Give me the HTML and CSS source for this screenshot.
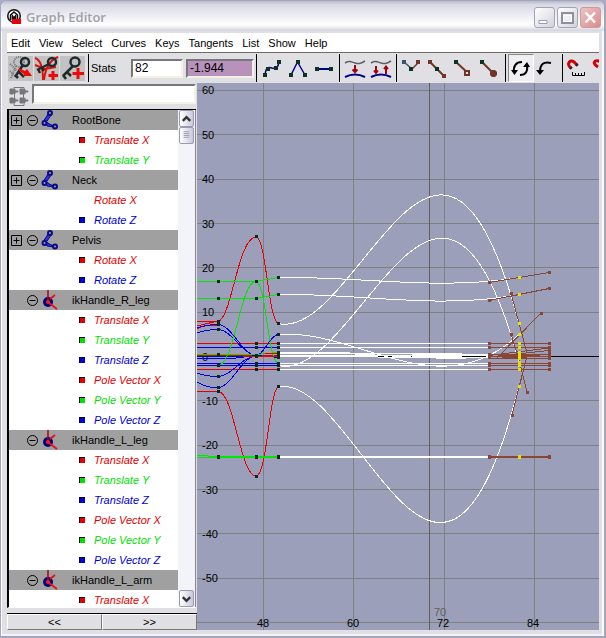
FILE: index.html
```html
<!DOCTYPE html>
<html lang="en">
<head>
<meta charset="utf-8">
<title>Graph Editor</title>
<link rel="stylesheet" href="styles.css">
</head>
<body>
<svg class="defs" aria-hidden="true">
  <symbol id="joint" viewBox="0 0 18 20">
    <path d="M9 3L3 13L14 17" fill="none" stroke="#0a0a8c" stroke-width="2"/>
    <path d="M7 4L2 12L6 11L11 4zM4 11L13 17L6 16z" fill="#2a35dc" stroke="#0a0a8c"/>
    <g fill="#a0a0a0" stroke="#0a0a8c" stroke-width="2"><circle cx="9" cy="3" r="2"/><circle cx="3.500" cy="13" r="2"/><circle cx="14" cy="16.500" r="2"/></g>
  </symbol>
  <symbol id="ik" viewBox="0 0 18 20">
    <circle cx="7" cy="12" r="5" fill="#000078"/>
    <path d="M7 0V12" stroke="#b00010" stroke-width="1.500"/>
    <path d="M9 9L14 5M8 13L16 19" stroke="#e81020" stroke-width="2"/>
    <circle cx="7" cy="12" r="2" fill="#f02030"/>
  </symbol>
  <symbol id="plus" viewBox="0 0 11 11"><path d="M.5.5h10v10H.5zM2.500 5.500h6M5.500 2.500v6" fill="none" stroke="#000"/></symbol>
  <symbol id="minus" viewBox="0 0 11 11"><circle cx="5.500" cy="5.500" r="5" fill="none" stroke="#000"/><path d="M2.500 5.500h6" stroke="#000"/></symbol>
</svg>
<div class="window">
  <header class="titlebar">
    <svg class="logo" viewBox="0 0 16 16"><circle cx="7" cy="7" r="7" fill="#111"/><circle cx="7" cy="7" r="5.500" fill="#fff"/><path d="M3.500 11V6L7 3L10.500 6V11M5.500 11V7L7 9L8.500 7V11" fill="none" stroke="#111" stroke-width="1.500"/><path d="M5 10H14V15H5z" fill="#e80010"/></svg>
    <h1>Graph Editor</h1>
    <button class="win" aria-label="Minimize"><svg viewBox="0 0 19 19"><path d="M4 12.500h8v3H4z" fill="#fff" stroke="#9a9aac"/></svg></button>
    <button class="win" aria-label="Maximize"><svg viewBox="0 0 19 19"><path d="M4 5h11v10H4z" fill="none" stroke="#8f8fa0" stroke-width="2"/><path d="M5.500 7.500h8v6h-8z" fill="#eeeef4" stroke="#fff"/></svg></button>
    <button class="win close" aria-label="Close"><svg viewBox="0 0 19 19"><path d="M4.500 4.500L14 14.500M14 4.500L4.500 14.500" stroke="#fff" stroke-width="2.500"/></svg></button>
  </header>
  <div class="client">
    <nav class="menu">
      <button>Edit</button><button>View</button><button>Select</button><button>Curves</button><button>Keys</button><button>Tangents</button><button>List</button><button>Show</button><button>Help</button>
    </nav>
    <div class="toolbar">
      <button class="tool key" aria-label="Move nearest key"><svg viewBox="0 0 26 25"><g fill="none" stroke="#777" stroke-width="2" stroke-dasharray="1 1"><circle cx="11" cy="6" r="5"/><path d="M8 10L3 22M2 8L9 15M2 15L7 20"/></g><g fill="none" stroke="#202a2c" stroke-width="2.500"><circle cx="17" cy="6" r="4"/><path d="M15 9L7 21M7 19L10 22M11 16L16 21"/></g><path d="M11 12L17 15L19 13L24 20L15 20L16 18L10 14z" fill="#ee0808"/></svg></button>
      <button class="tool key" aria-label="Insert keys"><svg viewBox="0 0 26 25"><path d="M1 2C7 4 9 12 9 24M24 1C14 5 11 15 10 24M1 9L11 13L22 11" fill="none" stroke="#e01010" stroke-width="2"/><g fill="none" stroke="#202a2c" stroke-width="2.500"><circle cx="18" cy="6" r="4"/><path d="M15 8L3 14M4 13L6 17M8 12L10 15"/></g><path d="M19 15V24M14.500 19.500H24" stroke="#ee0808" stroke-width="3"/></svg></button>
      <button class="tool key" aria-label="Add keys"><svg viewBox="0 0 26 25"><g fill="none" stroke="#202a2c" stroke-width="2.500"><circle cx="15" cy="6" r="4.500"/><path d="M13 10L3 20M3 19L6 23M7 16L11 20"/></g><path d="M18 12V23M12.500 17.500H24" stroke="#ee0808" stroke-width="3"/></svg></button>
      <span class="sep"></span>
      <label class="stats" for="frame">Stats</label>
      <input class="field frame" id="frame" value="82">
      <input class="field value" id="value" aria-label="Stats value" value="-1.944">
      <span class="sep"></span>
      <button class="tool" aria-label="Spline tangents"><svg viewBox="0 0 26 26"><path d="M6 20C7 12 9 12 13 13C18 14 19 12 20 7" fill="none" stroke="#00008c" stroke-width="1.500"/><g fill="#0c3320"><path d="M4 18h4v4H4zM7 12h4v4H7zM15 11h4v4h-4zM18 5h4v4h-4z"/></g></svg></button>
      <button class="tool" aria-label="Linear tangents"><svg viewBox="0 0 26 26"><path d="M6 20L12.500 7L20 20" fill="none" stroke="#00008c" stroke-width="1.500"/><path d="M4 18h4v4H4zM11 5h4v4h-4zM18 18h4v4h-4z" fill="#0c3320"/></svg></button>
      <button class="tool" aria-label="Flat tangents"><svg viewBox="0 0 26 26"><path d="M5 14H21" stroke="#00008c" stroke-width="2"/><path d="M4 12h4v4H4zM18 12h4v4h-4z" fill="#0c3320"/></svg></button>
      <span class="sep"></span>
      <button class="tool" aria-label="Buffer curve snapshot"><svg viewBox="0 0 26 26"><path d="M3 8C8 5 9 7 13 8S18 9 23 6" fill="none" stroke="#606060" stroke-width="1.500"/><path d="M3 22Q13 17 23 22" fill="none" stroke="#000090" stroke-width="2"/><path d="M13 10V17M10.500 14.500L13 17L15.500 14.500" fill="none" stroke="#a00010" stroke-width="2"/></svg></button>
      <button class="tool" aria-label="Swap buffer curves"><svg viewBox="0 0 26 26"><path d="M3 8C8 5 9 7 13 8S18 9 23 6" fill="none" stroke="#606060" stroke-width="1.500"/><path d="M3 22Q13 17 23 22" fill="none" stroke="#000090" stroke-width="2"/><path d="M8 11V18M6 15.500L8 18L10 15.500M18 19V12M16 14L18 11.500L20 14" fill="none" stroke="#a00010" stroke-width="2"/></svg></button>
      <span class="sep"></span>
      <button class="tool" aria-label="Break tangents"><svg viewBox="0 0 26 26"><path d="M5 7L13 14" stroke="#3b5370" stroke-width="1.500"/><path d="M13 14L20 7" stroke="#713526" stroke-width="1.500"/><path d="M3 5h4v4H3z" fill="#3b5370"/><path d="M17 5h4v4h-4z" fill="#713526"/><path d="M10 12h4v4h-4z" fill="#0c3320"/></svg></button>
      <button class="tool" aria-label="Unify tangents"><svg viewBox="0 0 26 26"><path d="M5 7L19 21" stroke="#713526" stroke-width="2"/><path d="M3 5h4v4H3zM17 19h4v4h-4z" fill="#713526"/><path d="M10 12h4v4h-4z" fill="#0c3320"/></svg></button>
      <button class="tool" aria-label="Free tangent weight"><svg viewBox="0 0 26 26"><path d="M5 7L18 19" stroke="#713526" stroke-width="2"/><path d="M3 5h4v4H3z" fill="#0c3320"/><path d="M14 16h4v4h-4z" fill="#e0dfe3" stroke="#713526" stroke-width="2"/></svg></button>
      <button class="tool" aria-label="Lock tangent weight"><svg viewBox="0 0 26 26"><path d="M5 7L17 19" stroke="#713526" stroke-width="2"/><path d="M3 5h4v4H3z" fill="#0c3320"/><path d="M13 17L15 15H18L20 17V20L18 22H15L13 20z" fill="#713526"/></svg></button>
      <span class="sep"></span>
      <button class="tool pressed" aria-label="Auto load"><svg viewBox="0 0 26 26"><path d="M14 7C8 7 5 11 6 18M12 20C18 20 20 16 19 10" fill="none" stroke="#000" stroke-width="2"/><path d="M3 15H10L6.500 20zM15 12H22L19 7z"/></svg></button>
      <button class="tool" aria-label="Load selection"><svg viewBox="0 0 26 26"><path d="M17 8C10 6 6 9 6 17" fill="none" stroke="#000" stroke-width="2"/><path d="M2 15H10L6 20z"/></svg></button>
      <span class="sep"></span>
      <button class="tool" aria-label="Time snap"><svg viewBox="0 0 26 26"><path d="M6 13C1 9 5 4 9 7L12 10" fill="none" stroke="#d00008" stroke-width="3"/><path d="M5 14L7 12M11 11L13 9" stroke="#222" stroke-width="2"/><path d="M7.500 17V20.500H19.500V17M10.500 20V18M13.500 20V18M16.500 20V18" fill="none" stroke="#000"/></svg></button>
      <button class="tool" aria-label="Value snap"><svg viewBox="0 0 26 26"><path d="M7 12C1 8 3 5 8 6L11 9" fill="none" stroke="#d00008" stroke-width="3"/></svg></button>
    </div>
    <main class="work">
      <aside class="outliner">
        <div class="search">
          <svg viewBox="0 0 20 20"><path d="M5 3V1.500H15V3M5.500 7V12M14.500 7V12M5 17V19.500H15V17" fill="none" stroke="#777"/><path d="M1 3h3v1l2-1v2h3v1H6v2L4 7v1H1zM11 3h3v1l2-1v2h3v1h-3v2l-2-1v1h-3zM1 12h3v1l2-1v2h3v1H6v2l-2-1v1H1zM11 12h3v1l2-1v2h3v1h-3v2l-2-1v1h-3z" fill="#777" stroke="#777"/></svg>
          <input class="field" aria-label="Filter" value="">
        </div>
        <div class="list">
          <ul class="tree">
            <li class="node"><button aria-label="Expand"><svg><use href="#plus"/></svg></button><button aria-label="Collapse"><svg><use href="#minus"/></svg></button><svg class="kind"><use href="#joint"/></svg><span>RootBone</span></li>
            <li class="chan red"><i></i><span>Translate X</span></li>
            <li class="chan green"><i></i><span>Translate Y</span></li>
            <li class="node"><button aria-label="Expand"><svg><use href="#plus"/></svg></button><button aria-label="Collapse"><svg><use href="#minus"/></svg></button><svg class="kind"><use href="#joint"/></svg><span>Neck</span></li>
            <li class="chan red bare"><i></i><span>Rotate X</span></li>
            <li class="chan blue"><i></i><span>Rotate Z</span></li>
            <li class="node"><button aria-label="Expand"><svg><use href="#plus"/></svg></button><button aria-label="Collapse"><svg><use href="#minus"/></svg></button><svg class="kind"><use href="#joint"/></svg><span>Pelvis</span></li>
            <li class="chan red"><i></i><span>Rotate X</span></li>
            <li class="chan blue"><i></i><span>Rotate Z</span></li>
            <li class="node leaf"><button aria-label="Collapse"><svg><use href="#minus"/></svg></button><svg class="kind"><use href="#ik"/></svg><span>ikHandle_R_leg</span></li>
            <li class="chan red"><i></i><span>Translate X</span></li>
            <li class="chan green"><i></i><span>Translate Y</span></li>
            <li class="chan blue"><i></i><span>Translate Z</span></li>
            <li class="chan red"><i></i><span>Pole Vector X</span></li>
            <li class="chan green"><i></i><span>Pole Vector Y</span></li>
            <li class="chan blue"><i></i><span>Pole Vector Z</span></li>
            <li class="node leaf"><button aria-label="Collapse"><svg><use href="#minus"/></svg></button><svg class="kind"><use href="#ik"/></svg><span>ikHandle_L_leg</span></li>
            <li class="chan red"><i></i><span>Translate X</span></li>
            <li class="chan green"><i></i><span>Translate Y</span></li>
            <li class="chan blue"><i></i><span>Translate Z</span></li>
            <li class="chan red"><i></i><span>Pole Vector X</span></li>
            <li class="chan green"><i></i><span>Pole Vector Y</span></li>
            <li class="chan blue"><i></i><span>Pole Vector Z</span></li>
            <li class="node leaf"><button aria-label="Collapse"><svg><use href="#minus"/></svg></button><svg class="kind"><use href="#ik"/></svg><span>ikHandle_L_arm</span></li>
            <li class="chan red"><i></i><span>Translate X</span></li>
          </ul>
          <div class="scroll">
            <button aria-label="Scroll up"><svg viewBox="0 0 14 14"><path d="M3 9L7 5L11 9" fill="none" stroke="#333" stroke-width="2.500"/></svg></button>
            <div class="thumb"><svg viewBox="0 0 14 14"><path d="M4 3.500h6M4 5.500h6M4 7.500h6M4 9.500h6" stroke="#9a9ab0"/></svg></div>
            <button class="down" aria-label="Scroll down"><svg viewBox="0 0 14 14"><path d="M3 5L7 9L11 5" fill="none" stroke="#333" stroke-width="2.500"/></svg></button>
          </div>
        </div>
        <div class="pager"><button>&lt;&lt;</button><button>&gt;&gt;</button></div>
      </aside>
      <svg class="graph" viewBox="197 83 402 547" preserveAspectRatio="xMinYMin slice" shape-rendering="crispEdges" role="img" aria-label="Animation curves">
        <path class="grid" d="M197 90.500H999M197 134.500H999M197 179.500H999M197 223.500H999M197 267.500H999M197 312.500H999M197 400.500H999M197 445.500H999M197 489.500H999M197 533.500H999M197 578.500H999M197 622.500H999M263.500 83V999M353.500 83V999M444.500 83V999M534.500 83V999"/>
        <path d="M197 356.500H999" stroke="#000"/>
        <path d="M429.500 83V999" stroke="#646050"/>
        <g class="axis" shape-rendering="auto">
          <text x="202" y="94">60</text><text x="202" y="139">50</text><text x="202" y="183">40</text><text x="202" y="228">30</text><text x="202" y="272">20</text><text x="202" y="316">10</text><text x="202" y="361">0</text><text x="202" y="405">-10</text><text x="202" y="449">-20</text><text x="202" y="494">-30</text><text x="202" y="538">-40</text><text x="202" y="582">-50</text>
          <text x="257" y="627">48</text><text x="347" y="627">60</text><text x="437" y="627">72</text><text x="527" y="627">84</text>
          <text class="now" x="434" y="616">70</text>
        </g>
        <g class="curve white">
          <path d="M278 323.500C358 342 439 25 519 323.500M278 365.500C358 385 439 72 519 362M278 386.500C358 374 439 699 519 386.500M278 334.500C358 328 439 409 519 334.500"/>
          <path d="M278 277.500C358 276 439 291 519 277.500M278 294.500C358 293 439 310 519 294.500"/>
          <path d="M278 343.500H489M278 347.500H489M278 363.500H489M278 365.500H489M278 369.500H489"/>
          <path d="M278 457H489M278 353H350" stroke-width="2"/>
          <path d="M278 355.500H489M278 353C358 350 420 362 489 357M278 354C350 352 400 354 489 354.500M278 357C350 356 400 358 489 357"/>
          <path d="M412 355H462" stroke-width="4"/>
        </g>
        <g class="curve redc">
          <path d="M197 321.500H218C232 318 238 237 256 237C266 237 268 318 278 323.500M197 391.500H218C234 391 240 476 256 476C267 476 269 394 278 386.500M197 326L218 321M197 329C204 325 210 325 218 325"/>
          <path d="M197 343.500H278M197 369.500H278M197 355.500H278"/>
        </g>
        <g class="curve bluec">
          <path d="M197 328C205 325 210 324.500 218 324.500C232 325 241 353 256 356M197 333C205 330 210 329.500 218 329.500C232 330 241 353 256 356M197 373C205 376 210 376.500 218 376.500C232 376 241 357 256 356M197 382C205 387 210 387.500 218 387.500C232 387 241 357 256 356C264 355 270 335 278 334.500"/>
          <path d="M197 347.500H278M197 363.500H278M197 365.500H278M197 356.500H278M197 358.500H232L256 355.500L278 357.500"/>
        </g>
        <g class="curve greenc">
          <path d="M197 281.500H256L278 277.500M197 298.500H256L278 294.500M218 365.500C235 365 240 281.500 256 281.500C266 282 268 362 278 363"/>
          <path d="M197 354.500H256L278 352.500M197 455.500H208M197 457.500H208"/><path d="M208 457H278" stroke-width="2"/>
        </g>
        <path d="M243 356.500H278M265 353.500H278" stroke="#e80000"/>
        <g class="curve brown">
          <path d="M489 282.500L519 277.500L549 272.500M489 300.500L519 294.500L549 288.500M489 343.500H549M489 347.500H549M489 363.500H549M489 365.500H549M489 369.500H549"/>
          <path d="M511 293L527 353M511 334L519 360L527 392M512 415L527 356M496 359L541 313"/>
          <path d="M489 354.500H549M489 355.500L549 348M489 357L549 350.500M489 358.500H549M489 356.500H549"/>
          <path d="M489 457H549M500 356H540" stroke-width="2"/><path d="M502 356H526" stroke-width="4"/>
        </g>
        <g class="dark">
          <path d="M217 280h3v3h-3zM217 297h3v3h-3zM217 320h3v3h-3zM217 323h3v3h-3zM217 328h3v3h-3zM217 353h3v3h-3zM217 364h3v3h-3zM217 375h3v3h-3zM217 386h3v3h-3zM217 390h3v3h-3zM217 455h3v4h-3z"/>
          <path d="M255 235h3v3h-3zM255 280h3v3h-3zM255 297h3v3h-3zM255 342h3v3h-3zM255 346h3v3h-3zM255 354h3v4h-3zM255 362h3v5h-3zM255 368h3v3h-3zM255 455h3v4h-3zM255 475h3v3h-3z"/>
          <path d="M277 276h3v3h-3zM277 293h3v3h-3zM277 322h3v3h-3zM277 333h3v3h-3zM277 342h3v3h-3zM277 346h3v3h-3zM277 351h3v8h-3zM277 362h3v5h-3zM277 368h3v3h-3zM277 385h3v3h-3zM277 455h3v4h-3z"/>
        </g>
        <path fill="#8a4634" d="M488 281h3v3h-3zM488 299h3v3h-3zM488 342h3v3h-3zM488 346h3v3h-3zM488 353h3v6h-3zM488 362h3v5h-3zM488 368h3v3h-3zM488 455h3v4h-3zM548 271h3v3h-3zM548 287h3v3h-3zM548 342h3v3h-3zM548 346h3v14h-3zM548 362h3v5h-3zM548 368h3v3h-3zM548 455h3v4h-3zM510 292h3v3h-3zM510 333h3v3h-3zM511 414h3v3h-3zM526 391h3v3h-3zM540 312h3v3h-3z"/>
        <path fill="#e6e200" d="M518 276h3v3h-3zM518 293h3v3h-3zM518 322h3v3h-3zM518 333h3v3h-3zM518 342h3v3h-3zM518 346h3v3h-3zM518 351h3v9h-3zM518 361h3v6h-3zM518 368h3v3h-3zM518 385h3v3h-3zM518 455h3v4h-3z"/>
      </svg>
    </main>
  </div>
</div>
</body>
</html>
```
FILE: styles.css
```css
* { box-sizing: border-box; }
html, body { height: 100%; }
body { margin: 0; background: #a9adc6; font: 11px/14px "Liberation Sans", sans-serif; color: #000; }
button { font: inherit; color: inherit; background: none; border: 0; padding: 0; margin: 0; }
svg { display: block; }
.defs { display: none; }

.window {
  display: flex; flex-direction: column; height: 100vh; overflow: hidden;
  padding: 2px 5px 6px 3px;
  background: #e0dfe3; border: solid #a4a4bc; border-width: 1px 2px 2px 1px;
  border-radius: 7px 7px 0 0;
  box-shadow: inset 1px 0 #fff, inset -2px 0 #fafaff, inset 0 -2px #f2f2fa;
}
.titlebar {
  display: flex; align-items: center; flex: none; height: 30px; gap: 2px;
  margin: -2px -5px 0 -3px; padding: 2px 3px 0 6px;
  background: linear-gradient(#b8b8cc, #d8d8e4 12%, #eeeef4 50%, #fff 80%, #d8d8e2 97%);
}
.logo { width: 16px; height: 16px; }
.titlebar h1 { flex: 1; margin: 0; padding-left: 1px; font: 600 13px/18px "Open Sans", sans-serif; color: #a0a0a6; }
.win { width: 21px; height: 21px; border: 1px solid #a3a3b8; border-radius: 3px; background: linear-gradient(135deg, #fff, #d2d2de); }
.win svg { width: 19px; height: 19px; }
.close { border-color: #cf9a9c; background: linear-gradient(135deg, #ecc4c4, #d98c8c); }

.client { display: flex; flex-direction: column; flex: 1; min-height: 0; margin: 2px 0 0 3px; }
.menu { display: flex; flex: none; gap: 9px; height: 20px; padding: 0 4px; background: #fff; border-bottom: 1px solid #6e6c60; }
.toolbar { display: flex; flex: none; align-items: center; height: 30px; padding-left: 1px; overflow: hidden; }
.tool { flex: none; width: 26px; height: 28px; border: 1px solid transparent; }
.tool svg { width: 26px; height: 26px; margin: 0 -1px; }
.tool.key { height: 25px; border: 0; background: #c2c2c2; border-right: 1px solid #e0dfe3; }
.tool.key svg { height: 25px; margin: 0; }
.pressed { background: #efeff2; border-color: #888 #fff #fff #888; }
.sep { flex: none; width: 1px; height: 28px; margin: 0 2px; background: #000; }
.stats { flex: none; width: 40px; }
.field { min-width: 0; height: 19px; padding: 0 2px; border: 2px solid; border-color: #77777a #f4f2e4 #f4f2e4 #77777a; background: #fff; font: 12px/14px "Liberation Sans", sans-serif; border-radius: 0; }
.frame { flex: none; width: 52px; margin-right: 3px; }
.value { flex: none; width: 68px; background: #b892bc; }

.work { display: grid; grid-template-columns: 190px 1fr; flex: 1; min-height: 0; }
.outliner { display: flex; flex-direction: column; min-height: 0; }
.search { display: flex; flex: none; gap: 3px; height: 26px; padding: 1px 1px 0 2px; }
.search svg { flex: none; width: 20px; height: 20px; margin-top: 2px; }
.search .field { flex: 1; height: 20px; }
.list { display: flex; flex: 1; min-height: 0; margin-right: 1px; border: solid #000; border-width: 1px 0 0 2px; border-bottom: 1px solid #fff; background: #fff; overflow: hidden; }
.tree { flex: 1; margin: 0; padding: 0; list-style: none; overflow: hidden; }
.tree li { display: flex; align-items: center; height: 20px; white-space: nowrap; }
.node { padding-left: 2px; background: #a0a0a0; gap: 5px; }
.node button, .node button svg { width: 11px; height: 11px; }
.node .kind { width: 18px; height: 20px; margin: 0 8px 0 -2px; }
.leaf { padding-left: 18px; }
.chan { padding-left: 70px; gap: 9px; font-style: italic; }
.chan i { width: 6px; height: 6px; border: solid #000; border-width: 1px 0 0 1px; background: currentColor; }
.bare i { visibility: hidden; }
.red { color: #e00000; }
.green { color: #00e000; }
.blue { color: #0000d8; }
.scroll { display: flex; flex-direction: column; flex: none; width: 18px; padding: 0 1px; background: #f3f3fa; border-right: 1px solid #888; }
.scroll button, .thumb { flex: none; height: 17px; border: 1px solid #9a9ab0; border-radius: 2px; background: linear-gradient(90deg, #fff, #c8c8dc); }
.scroll svg { width: 13px; height: 14px; }
.scroll .down { margin-top: auto; }
.pager { display: flex; flex: none; margin-top: 5px; border-top: 1px solid #000; }
.pager button { flex: 1; height: 16px; border: 1px solid; border-color: #fff #77777a #77777a #fff; }

.graph { width: 100%; height: 100%; min-height: 0; background: #9b9fb9; }
.grid { stroke: #808080; }
.axis text { font: 11px "Liberation Sans", sans-serif; }
.axis .now { fill: #646050; }
.curve { fill: none; }
.white { stroke: #fff; }
.redc { stroke: #e80000; }
.bluec { stroke: #0000e0; }
.greenc { stroke: #00e800; }
.brown { stroke: #8a4634; }
.dark { fill: #0c2a1c; }
```
